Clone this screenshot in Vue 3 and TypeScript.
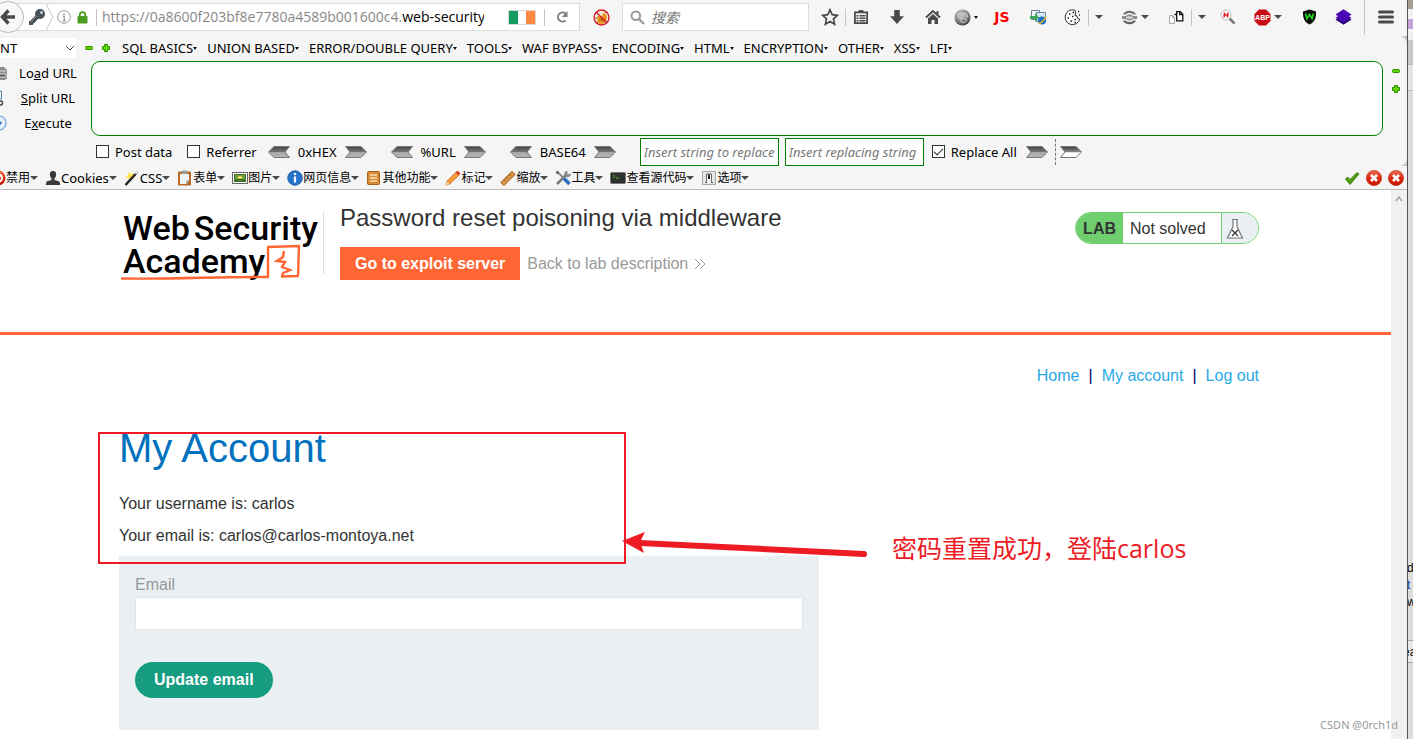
<script setup lang="ts">
import { ref } from 'vue'

const url = { scheme: 'https://0a8600f203bf8e7780a4589b001600c4.', host: 'web-security' }
const menus: string[] = ['SQL BASICS', 'UNION BASED', 'ERROR/DOUBLE QUERY', 'TOOLS', 'WAF BYPASS', 'ENCODING', 'HTML', 'ENCRYPTION', 'OTHER', 'XSS', 'LFI']
const codecs: string[] = ['0xHEX', '%URL', 'BASE64']

interface DevTool { id: string; label: string }
const devTools: DevTool[] = [
  { id: 'disable', label: '禁用' },
  { id: 'cookies', label: 'Cookies' },
  { id: 'css', label: 'CSS' },
  { id: 'forms', label: '表单' },
  { id: 'images', label: '图片' },
  { id: 'info', label: '网页信息' },
  { id: 'misc', label: '其他功能' },
  { id: 'outline', label: '标记' },
  { id: 'resize', label: '缩放' },
  { id: 'utils', label: '工具' },
  { id: 'source', label: '查看源代码' },
  { id: 'options', label: '选项' },
]

const query = ref('')
const target = ref('')
const postData = ref(false)
const referrer = ref(false)
const replaceAll = ref(true)
const needle = ref('')
const replacement = ref('')
const email = ref('')
</script>

<template>
  <div class="desktop">
    <div class="window">
      <svg class="defs" width="0" height="0" aria-hidden="true">
        <defs>
          <linearGradient id="steel" x1="0" y1="0" x2="0" y2="1">
            <stop offset="0" stop-color="#444" /><stop offset="0.5" stop-color="#777" /><stop offset="0.55" stop-color="#aaa" /><stop offset="1" stop-color="#b4b4b4" />
          </linearGradient>
          <linearGradient id="steelOpen" x1="0" y1="0" x2="0" y2="1">
            <stop offset="0" stop-color="#3c3c3c" /><stop offset="0.5" stop-color="#888" /><stop offset="0.56" stop-color="#fff" /><stop offset="1" stop-color="#fff" />
          </linearGradient>
          <radialGradient id="ball" cx="0.4" cy="0.3" r="0.7">
            <stop offset="0" stop-color="#ccc" /><stop offset="0.6" stop-color="#888" /><stop offset="1" stop-color="#444" />
          </radialGradient>
          <linearGradient id="redBall" x1="0" y1="0" x2="0" y2="1">
            <stop offset="0" stop-color="#f0704e" /><stop offset="0.5" stop-color="#dc2a12" /><stop offset="1" stop-color="#c81400" />
          </linearGradient>
        </defs>
      </svg>

      <header class="navbar">
        <button class="back" aria-label="Back">
          <svg width="16" height="16" viewBox="0 0 16 16"><path d="M8.500 1.500 2.500 8l6 6.500M3 8h12" fill="none" stroke="#4a4a4a" stroke-width="3.400" /></svg>
        </button>
        <div class="urlbar">
          <svg class="key" width="18" height="18" viewBox="0 0 18 18"><path d="M11.500 6.500 2.500 15.500" stroke="#3c4850" stroke-width="4" /><path d="M1 13v4h4v-2h2v-2h2" fill="#4a565e" /><circle cx="12" cy="6" r="5" fill="#47535b" /><circle cx="13.500" cy="4.500" r="1.500" fill="#c8d0d4" /><path d="M3 14 9 8" stroke="#8c989e" /></svg>
          <svg class="notch" width="8" height="28" viewBox="0 0 8 28"><path d="M0 1 7 14 0 27" fill="none" stroke="#c8c8c8" /></svg>
          <svg width="14" height="14" viewBox="0 0 14 14"><circle cx="7" cy="7" r="6.300" fill="none" stroke="#999" /><path d="M5.500 6H7.200V11M5.500 11h3M7 3v1.500" fill="none" stroke="#888" stroke-width="1.200" /></svg>
          <svg class="lock" width="11" height="13" viewBox="0 0 11 13"><rect x="0.500" y="5" width="10" height="7.500" rx="1" fill="#4b9b1f" /><path d="M2.800 6V3.800a2.700 2.700 0 0 1 5.400 0V6" fill="none" stroke="#4b9b1f" stroke-width="1.800" /></svg>
          <span class="bar"></span>
          <span class="address"><span class="scheme">{{ url.scheme }}</span>{{ url.host }}</span>
          <svg class="flag" width="28" height="15" viewBox="0 0 28 15"><rect x="0.500" y="0.500" width="27" height="14" fill="#fff" stroke="#d8d8d8" /><rect x="1" y="1" width="9" height="13" fill="#169b62" /><rect x="18" y="1" width="9" height="13" fill="#ff883e" /></svg>
          <span class="bar"></span>
          <button class="reload" aria-label="Reload">
            <svg width="14" height="14" viewBox="0 0 14 14"><path d="M10.500 10.500a4.600 4.600 0 1 1 0-7" fill="none" stroke="#808080" stroke-width="2" /><path d="M12.500 1v6H6.800Z" fill="#808080" /></svg>
          </button>
        </div>
        <button class="tool bug" aria-label="Firebug off">
          <svg width="17" height="17" viewBox="0 0 17 17"><circle cx="8.500" cy="8.500" r="7.500" fill="#f3e8dc" /><path d="M5 5 3.500 3M12 4l1-2M4 9H2M5 13l-2 1" stroke="#8a5a20" /><path d="M4 8c2-2 3 0 5-1l1-3 3 1 1 3-1 5-4 2-4-1Z" fill="#e8901c" /><path d="M6 11h6M8 9l2 3" stroke="#b05a10" /><circle cx="8.500" cy="8.500" r="7.500" fill="none" stroke="#d0202a" stroke-width="1.400" /><path d="m3 3 11 11" stroke="#d0202a" stroke-width="1.400" /></svg>
        </button>
        <label class="search">
          <svg width="15" height="15" viewBox="0 0 15 15"><circle cx="5.800" cy="5.800" r="4.300" fill="none" stroke="#999" stroke-width="2" /><path d="m9 9 5 5" stroke="#999" stroke-width="2.400" /></svg>
          <input v-model="query" type="search" placeholder="搜索" aria-label="搜索" />
        </label>

        <div class="addons">
          <button class="tool" aria-label="Bookmark"><svg width="18" height="18" viewBox="0 0 18 18"><path d="m9 1.800 2.200 4.900 5.200.6-3.900 3.600 1.100 5.300L9 13.500l-4.600 2.700 1.100-5.300L1.600 7.300l5.200-.6Z" fill="none" stroke="#4a4a4a" stroke-width="1.700" /></svg></button>
          <span class="bar"></span>
          <button class="tool" aria-label="Bookmark list"><svg width="16" height="16" viewBox="0 0 16 16"><path d="M1.900 3.400h12.200v10.700H1.900Z" fill="none" stroke="#4a4a4a" stroke-width="1.800" /><path d="M5 4V2l2-1h2l2 1v2Z" fill="#4a4a4a" /><path d="M3.500 6.800h2M6.500 6.800h6M3.500 9.300h2M6.500 9.300h6M3.500 11.800h2M6.500 11.800h6" stroke="#4a4a4a" stroke-width="1.400" /></svg></button>
          <button class="tool near" aria-label="Downloads"><svg width="16" height="16" viewBox="0 0 16 16"><path d="M5.200 1h5.600v6.200H15L8 15 1 7.200h4.200Z" fill="#4a4a4a" /></svg></button>
          <button class="tool near" aria-label="Home"><svg width="16" height="16" viewBox="0 0 16 16"><path d="M1 8.500 8 2l7 6.500M12.500 2v4" fill="none" stroke="#4a4a4a" stroke-width="2" /><path d="M3 9.500 8 5l5 4.500V15H9.500v-4h-3v4H3Z" fill="#4a4a4a" /></svg></button>
          <button class="tool mid" aria-label="Proxy"><svg width="17" height="17" viewBox="0 0 17 17"><circle cx="8.500" cy="8.500" r="8" fill="url(#ball)" /><path d="m4 5 3-1 2 2-1 3-3 0ZM10 4l3 1 1 3-3-1ZM7 10l4-1 2 2-3 3-3-1Z" fill="none" stroke="#d0d0d0" stroke-width="0.800" /></svg><i class="dot"></i></button>
          <button class="tool mid js">JS</button>
          <button class="tool mid" aria-label="Import"><svg width="17" height="16" viewBox="0 0 17 16"><path d="M1.500 1.500h8v9h-8Z" fill="#eef5fa" stroke="#6a8296" /><path d="M6.500 3.500h9v9h-9Z" fill="#d6e8f4" stroke="#6a8296" /><path d="M0 7h5V4l4 4.500L5 13v-3H0Z" fill="#3aa55c" /><circle cx="12" cy="11.500" r="4" fill="#1f6fc0" /><path d="M8.500 14.500c2 0 6-3 7.500-7" fill="none" stroke="#e8b428" stroke-width="1.400" /></svg></button>
          <button class="tool cookie" aria-label="Cookies"><svg width="17" height="17" viewBox="0 0 17 17"><path d="M11 1.300A7.400 7.400 0 1 0 15.700 10l-2.200-.5-.5-2.500-2-.5.500-2.500Z" fill="#fff" stroke="#333" /><path d="M5 5h1.500M8.500 3.500h1.500M3.500 9H5M8 7.500h1.500M6.500 12H8M10.500 10.500H12M10.500 13.500h1.500M14 2.500h1M15 6h1" stroke="#222" stroke-width="1.500" /></svg></button>
          <span class="bar"></span>
          <button class="tool slim" aria-label="Cookie menu"><i class="caret"></i></button>
          <button class="tool wide" aria-label="Agent"><svg width="17" height="17" viewBox="0 0 17 17"><path d="M2 5.500C4 .5 13 .5 15 5.500h-2.500c-2-2-6-2-8 0Z" fill="#707070" /><path d="M1 7h4c1.500-2 5.500-2 7 0h4v3h-4c-1.500 2-5.500 2-7 0H1Z" fill="#8c8c8c" /><ellipse cx="8.500" cy="8.500" rx="3.500" ry="1.300" fill="#d8d8d8" /><path d="M2 11.500c2 5 11 5 13 0h-2.500c-2 2-6 2-8 0Z" fill="#606060" /></svg><i class="caret"></i></button>
          <button class="tool" aria-label="Pages"><svg width="15" height="15" viewBox="0 0 15 15"><path d="M.5 5.500h3l2 2v6h-5ZM3.500 5.500v2h2" fill="#fafafa" stroke="#aaa" /><path d="M7.700 1.700h3.500l2.600 2.600v6.500H7.700ZM10.700 1.700v3h3M5.500 4.500h2" fill="#fff" stroke="#111" stroke-width="1.300" /></svg></button>
          <span class="bar"></span>
          <button class="tool slim" aria-label="Pages menu"><i class="caret"></i></button>
          <button class="tool cookie" aria-label="Http search"><svg width="16" height="16" viewBox="0 0 16 16"><path d="m9.500 9.500 5 5" stroke="#777" stroke-width="2.500" /><circle cx="6" cy="6" r="5" fill="#fff" stroke="#bbb" /><path d="M4.500 3.500 4 8.500M8 3.500l-.5 5M4.500 6H8" stroke="#e01818" stroke-width="1.500" /></svg></button>
          <button class="tool block" aria-label="Adblock"><svg width="17" height="17" viewBox="0 0 17 17"><path d="M5 .5h7L16.500 5v7L12 16.500H5L.5 12V5Z" fill="#c70d12" /><text x="8.500" y="11.300" text-anchor="middle" class="abp">ABP</text></svg><i class="caret"></i></button>
          <button class="tool shield" aria-label="Wappalyzer"><svg width="15" height="16" viewBox="0 0 15 16"><path d="M7.500.5 14 2.500c.3 6-1 10.500-6.500 13C2 13 .7 8.500 1 2.500Z" fill="#0a0a0a" /><path d="m3.500 4.500 1.500 5 2.500-4 2.500 4 1.500-5" fill="none" stroke="#1fd01f" stroke-width="1.800" /></svg></button>
          <button class="tool shield" aria-label="Layers"><svg width="17" height="16" viewBox="0 0 17 16"><path d="M.5 10.500 3 9h11l2.500 1.500-8 5.300Z" fill="#240070" /><path d="M8.500.2 16.500 5.500 14 7.200l2.500 1.600-8 4.700-8-4.700L3 7.200.5 5.500Z" fill="#4806b4" /></svg></button>
          <span class="bar tall"></span>
          <button class="tool menu" aria-label="Menu"><svg width="16" height="14" viewBox="0 0 16 14"><path d="M1.500 2h13M1.500 7h13M1.500 12h13" stroke="#4a4a4a" stroke-width="3" stroke-linecap="round" /></svg></button>
        </div>
      </header>

      <div class="hackwrap">
        <section class="hackbar">
          <nav class="menus">
            <span class="kind">
              <select aria-label="Mode"><option>NT</option></select>
              <svg width="10" height="6" viewBox="0 0 10 6"><path d="m1 1 4 4 4-4" fill="none" stroke="#444" /></svg>
            </span>
            <button class="step" aria-label="Remove"><svg width="8" height="8" viewBox="0 0 8 8"><rect x="0.500" y="2.500" width="7" height="3" rx="1" fill="#5fd800" stroke="#2c8a00" /></svg></button>
            <button class="step" aria-label="Add"><svg width="8" height="8" viewBox="0 0 8 8"><path d="M2.500.5h3v2h2v3h-2v2h-3v-2h-2v-3h2Z" fill="#5fd800" stroke="#2c8a00" /></svg></button>
            <button v-for="m in menus" :key="m" class="entry">{{ m }}<i class="dot"></i></button>
          </nav>

          <div class="editor">
            <div class="actions">
              <button><svg width="8" height="16" viewBox="0 0 8 16"><path d="M0 2h4l3 3v8l-2 2H0Z" fill="#8c8c8c" /><path d="M0 6h6M0 9h6v3H0" stroke="#e0e0e0" fill="#555" /></svg><span>Lo<u>a</u>d URL</span></button>
              <button><svg width="8" height="16" viewBox="0 0 8 16"><path d="M0 1h1.500v8H0" fill="none" stroke="#4a86a8" /><circle cx="0.500" cy="13" r="2" fill="none" stroke="#444" stroke-width="1.500" /></svg><span><u>S</u>plit URL</span></button>
              <button><svg width="8" height="16" viewBox="0 0 8 16"><circle cx="-1" cy="8" r="7" fill="#e6f0fb" stroke="#8cb0dc" stroke-width="1.500" /><path d="M-1 5 2 8l-3 3Z" fill="#2c70c8" /></svg><span>E<u>x</u>ecute</span></button>
            </div>
            <textarea v-model="target" aria-label="URL"></textarea>
            <div class="side">
              <button class="step" aria-label="Shrink"><svg width="8" height="8" viewBox="0 0 8 8"><rect x="0.500" y="2.500" width="7" height="3" rx="1" fill="#5fd800" stroke="#2c8a00" /></svg></button>
              <button class="step" aria-label="Grow"><svg width="8" height="8" viewBox="0 0 8 8"><path d="M2.500.5h3v2h2v3h-2v2h-3v-2h-2v-3h2Z" fill="#5fd800" stroke="#2c8a00" /></svg></button>
            </div>
          </div>

          <div class="encoders">
            <label class="check"><input v-model="postData" type="checkbox" />Post data</label>
            <label class="check"><input v-model="referrer" type="checkbox" />Referrer</label>
            <div v-for="c in codecs" :key="c" class="codec">
              <button :aria-label="c + ' decode'"><svg width="22" height="12" viewBox="0 0 22 12"><path d="M6 .5h15.500L17 6l4.500 5.500H6L.5 6Z" fill="url(#steel)" stroke="#777" /></svg></button>
              <span>{{ c }}</span>
              <button :aria-label="c + ' encode'"><svg width="22" height="12" viewBox="0 0 22 12"><path d="M.5.5H16L21.500 6 16 11.500H.5L5 6Z" fill="url(#steel)" stroke="#777" /></svg></button>
            </div>
            <div class="swap">
              <input v-model="needle" type="text" placeholder="Insert string to replace" aria-label="Insert string to replace" />
              <input v-model="replacement" type="text" placeholder="Insert replacing string" aria-label="Insert replacing string" />
              <label class="check"><input v-model="replaceAll" type="checkbox" />Replace All</label>
            </div>
            <button aria-label="Replace"><svg width="22" height="12" viewBox="0 0 22 12"><path d="M.5.5H16L21.500 6 16 11.500H.5L5 6Z" fill="url(#steel)" stroke="#777" /></svg></button>
            <button class="last" aria-label="Reverse"><svg width="22" height="12" viewBox="0 0 22 12"><path d="M.5.5H16L21.500 6 16 11.500H.5L5 6Z" fill="url(#steelOpen)" stroke="#777" /></svg></button>
          </div>
        </section>
      </div>

      <nav class="devbar">
        <button v-for="t in devTools" :key="t.id" :class="['dev', t.id]">
          <svg v-if="t.id === 'disable'" width="6" height="16" viewBox="10 0 6 16"><circle cx="8" cy="8" r="7.500" fill="url(#redBall)" /><circle cx="8" cy="8" r="4" fill="none" stroke="#fff" stroke-width="2" /><path d="m11 5-6 6" stroke="#fff" stroke-width="2" /></svg>
          <svg v-else-if="t.id === 'cookies'" width="16" height="16" viewBox="0 0 16 16"><path d="M8 1c3 0 3.500 2.500 3 4.500S10 8 9.500 8.500V10l5 1.500.8 3.500H.7l.8-3.500 5-1.500V8.500C6 8 5.500 7.500 5 5.500S5 1 8 1Z" fill="#3a3a3a" /></svg>
          <svg v-else-if="t.id === 'css'" width="16" height="16" viewBox="0 0 16 16"><path d="m5 1 1.500 3L10 3 8.500 6 11 8.500l-3.500 0L6 12 4.500 8 1 7.500 4 5.500Z" fill="#ffe04a" /><path d="M1.500 15 13 2.500" stroke="#222" stroke-width="2.500" /><path d="m11.500 4 2.500-2.800" stroke="#ddd" stroke-width="2.500" /></svg>
          <svg v-else-if="t.id === 'forms'" width="16" height="16" viewBox="0 0 16 16"><rect x="1" y="1.500" width="13" height="14" rx="1" fill="#b86a28" /><path d="M3 4h9v6l-3 4H3Z" fill="#eef3f8" /><path d="M12 10H9v4Z" fill="#b8c4d0" /><rect x="5" y="0.500" width="5" height="3.500" fill="#999" /></svg>
          <svg v-else-if="t.id === 'images'" width="16" height="16" viewBox="0 0 16 16"><rect x="0.500" y="2.500" width="15" height="11" fill="#fff" stroke="#666" /><rect x="2.500" y="4.500" width="11" height="7" fill="#6fa23c" stroke="#3e6e28" /><circle cx="8" cy="8" r="2" fill="#fbe05a" /><path d="M3 11c2-2 8-2 10 0" stroke="#285c1a" stroke-width="1.500" fill="none" /></svg>
          <svg v-else-if="t.id === 'info'" width="16" height="16" viewBox="0 0 16 16"><circle cx="8" cy="8" r="7.200" fill="#2676cc" stroke="#1458a8" /><path d="M8 6.500v6M8 3v2" stroke="#fff" stroke-width="2.200" /></svg>
          <svg v-else-if="t.id === 'misc'" width="16" height="16" viewBox="0 0 16 16"><rect x="1.500" y="1.500" width="12" height="13" rx="1" fill="#d58a34" stroke="#a8601a" /><path d="M4 5h7M4 8h7M4 11h7" stroke="#fbe2b4" stroke-width="1.500" /></svg>
          <svg v-else-if="t.id === 'outline'" width="16" height="16" viewBox="0 0 16 16"><path d="m1 15 1-4L11 2l3 3-9 9Z" fill="#f49b3a" stroke="#c46a18" stroke-width="0.700" /><path d="m10.500 2.500 2-2 3 3-2 2Z" fill="#d8442c" /><path d="m1 15 1-3.500L4.500 14Z" fill="#f6dfb8" /></svg>
          <svg v-else-if="t.id === 'resize'" width="16" height="16" viewBox="0 0 16 16"><path d="M.8 12.500 12 1.200 15.200 4.400 4 15.500Z" fill="#dc9548" stroke="#a8621e" /><path d="m4 9.500 1.500 1.500M6.500 7 8 8.500M9 4.500l1.500 1.500" stroke="#8a4c12" /></svg>
          <svg v-else-if="t.id === 'utils'" width="16" height="16" viewBox="0 0 16 16"><path d="m2 14 9-9" stroke="#777" stroke-width="2.500" /><path d="M10 1.500 13 1l-1 2 1.500 1.500L15.500 3v3l-3 1.500L9 5Z" fill="#888" /><path d="m2 1.500 7 7" stroke="#888" stroke-width="1.800" /><path d="m9 8.500 5.500 5.500" stroke="#2a6cc0" stroke-width="3.500" /><path d="M.5 2.500 2.500.5l2 2-2 2Z" fill="#666" /></svg>
          <svg v-else-if="t.id === 'source'" width="16" height="16" viewBox="0 0 16 16"><rect x="0.500" y="2.500" width="15" height="11" rx="1" fill="#2c332c" stroke="#777" /><path d="m3 5 2 1.500L3 8M6 8h3" fill="none" stroke="#63b044" /></svg>
          <svg v-else width="16" height="16" viewBox="0 0 16 16"><rect x="1.500" y="1.500" width="13" height="13" fill="#e6e6e6" stroke="#aaa" /><path d="M5.500 12.500V4h5v8.500M4 12.500h2M10 12.500h2" fill="#f4f4f4" stroke="#666" /><path d="M8 4.500V9" stroke="#222" stroke-width="2" /></svg>
          <span>{{ t.label }}</span><i class="caret"></i>
        </button>
        <div class="status">
          <svg width="16" height="16" viewBox="0 0 16 16"><path d="m1.500 9 2-2 2.500 2.500L13 2.500l2 1.500-9 10.500Z" fill="#4fa00e" stroke="#2f6e08" stroke-width="0.800" /></svg>
          <svg v-for="n in 2" :key="n" width="16" height="16" viewBox="0 0 16 16"><circle cx="8" cy="8" r="7.600" fill="url(#redBall)" stroke="#b81800" stroke-width="0.600" /><path d="m5 5 6 6M11 5l-6 6" stroke="#fff" stroke-width="2.600" /></svg>
        </div>
      </nav>

      <div class="viewport">
        <main class="page">
          <header class="lab">
            <div class="labrow">
              <a class="brand" href="#" aria-label="Web Security Academy">
                <span class="line"><span>Web</span><span>Security</span></span>
                <span class="line">Academy</span>
                <svg class="swoosh" width="184" height="38" viewBox="0 0 184 38"><path d="M2 34.500c50 1 100-2 147-1.500L149 3l31-1-1 30-17 .5" fill="none" stroke="#ff6633" stroke-width="2.400" stroke-linejoin="round" /><path d="m165 7-1 6-6 4 8 1-3 5 8 3-7 3-1 4" fill="none" stroke="#ff6633" stroke-width="2.400" /></svg>
              </a>
              <div class="titles">
                <h2>Password reset poisoning via middleware</h2>
                <div class="links">
                  <a class="exploit" href="#">Go to exploit server</a>
                  <a class="return" href="#">Back to lab description
                    <svg width="12" height="12" viewBox="0 0 12 12"><path d="m1 1 5 5-5 5M6 1l5 5-5 5" fill="none" stroke="#999" /></svg></a>
                </div>
              </div>
              <div class="badge">
                <b>LAB</b><span>Not solved</span>
                <i><svg width="18" height="22" viewBox="0 0 18 22"><path d="M6 1.500h6M7 2v6.500L1.500 20h15L11 8.500V2" fill="#fff" stroke="#777" stroke-width="1.200" /><path d="m6 12 6 6M12 12l-6 6" stroke="#333" stroke-width="1.200" /></svg></i>
              </div>
            </div>
          </header>

          <div class="content">
            <nav class="account">
              <a href="#">Home</a><span>|</span><a href="#">My account</a><span>|</span><a href="#">Log out</a>
            </nav>
            <h1>My Account</h1>
            <p>Your username is: carlos</p>
            <p>Your email is: carlos@carlos-montoya.net</p>
            <form class="change" @submit.prevent>
              <label for="email">Email</label>
              <input id="email" v-model="email" type="email" />
              <button type="submit">Update email</button>
            </form>
          </div>
        </main>
        <div class="scrollbar"><svg width="8" height="6" viewBox="0 0 8 6"><path d="m1 5 3-4 3 4" fill="none" stroke="#aaa" stroke-width="1.600" /></svg></div>
      </div>
    </div>

    <aside class="behind" aria-hidden="true">
      <div class="sky"></div><div class="tab"></div><div class="grey"></div><div class="rows"></div>
      <div class="words"><span>d</span><span class="blue">t</span><span>w</span></div>
      <div class="cell"><span>ea</span></div>
    </aside>

    <div class="frame"></div>
    <svg class="arrow" width="246" height="32" viewBox="0 0 246 32"><path d="M18 11 242 22" stroke="#ed1c24" stroke-width="6" stroke-linecap="round" /><path d="M0 9 23 0 18 10 22 21Z" fill="#ed1c24" /></svg>
    <div class="note">密码重置成功，登陆carlos</div>
    <div class="mark">CSDN @0rch1d</div>
  </div>
</template>

<style>
body { margin: 0; }
</style>

<style scoped>
* { box-sizing: border-box; }
.desktop { position: relative; display: flex; min-height: 100vh; overflow: hidden; background: #d9d9d9; font-family: "Noto Sans", "Noto Sans CJK SC", sans-serif; font-size: 13px; color: #000; }
.window { flex: 1; min-width: 0; display: flex; flex-direction: column; background: #f5f5f5; border-right: 1px solid #555; }
.defs { position: absolute; }
button { border: 0; padding: 0; background: none; font: inherit; color: inherit; }
svg { display: block; flex: none; overflow: hidden; }
i { font-style: normal; flex: none; }
.bar { flex: none; width: 1px; height: 17px; background: #c4c4c4; }
.caret { width: 0; height: 0; border: 4px solid transparent; border-top-color: #4a4a4a; border-bottom: 0; }
.dot { width: 0; height: 0; border: 2px solid transparent; border-top: 3px solid #111; border-bottom: 0; }

.navbar { display: flex; align-items: center; height: 36px; padding-bottom: 2px; }
.back { position: relative; z-index: 1; flex: none; display: grid; place-items: center; width: 32px; height: 32px; margin-left: -8px; border: 1px solid #bbb; border-radius: 16px; background: #f8f8f8; }
.urlbar { flex: 1; min-width: 0; display: flex; align-items: center; height: 28px; margin-left: -8px; padding-left: 11px; border: 1px solid #dcdcdc; background: #fff; }
.notch { margin-right: 3px; }
.lock { margin: 0 8px 0 6px; }
.address { flex: 1; min-width: 0; margin: 0 24px 0 5px; overflow: hidden; white-space: nowrap; font-family: "Open Sans", sans-serif; font-size: 14px; line-height: 24px; }
.scheme { color: #888; }
.flag { margin-right: 8px; }
.reload { display: grid; place-items: center; width: 34px; height: 26px; }
.search { flex: none; display: flex; align-items: center; gap: 6px; width: 187px; height: 28px; margin-left: 6px; padding-left: 7px; border: 1px solid #dcdcdc; background: #fff; }
.search input { flex: 1; min-width: 0; border: 0; padding: 0; outline: 0; background: none; font: italic 14px "Noto Sans CJK SC", sans-serif; }
.search input::placeholder { color: #777; }
.addons { flex: none; display: flex; align-items: center; margin-left: 6px; }
.tool { flex: none; display: flex; align-items: center; justify-content: center; gap: 3px; width: 30px; height: 30px; }
.tool.near { margin-left: 6px; }
.tool.cookie { width: 32px; }
.tool.shield { width: 34px; }
.tool.mid { width: 36px; }
.tool.slim { width: 20px; }
.tool.wide { width: 52px; }
.tool.block { width: 48px; }
.tool.menu { width: 42px; }
.tool.bug { margin-left: 6px; }
.bar.tall { height: 36px; margin-left: 4px; }
.js { color: #f00; font: bold 14px "DejaVu Sans", sans-serif; }
.abp { fill: #fff; font: bold 7px "Liberation Sans", sans-serif; }

.hackwrap { background: #c4c4c4; }
.hackbar { background: #f5f5f5; border-radius: 0 8px 8px 0; }
.menus { display: flex; align-items: center; height: 24px; }
.kind { position: relative; flex: none; width: 76px; height: 20px; margin-right: 9px; background: #fff; }
.kind select { width: 100%; height: 100%; border: 0; padding: 0; appearance: none; background: none; font: inherit; }
.kind svg { position: absolute; right: 1px; top: 7px; }
.step { flex: none; width: 9px; margin-right: 8px; }
.entry { flex: none; display: flex; align-items: center; margin-right: 10px; line-height: 18px; }
.step + .entry { margin-left: 3px; }
.editor { display: flex; padding-top: 1px; }
.actions { flex: none; width: 91px; }
.actions button { display: flex; align-items: center; width: 100%; height: 25px; padding-bottom: 2px; }
.actions span { flex: 1; padding-right: 3px; text-align: center; }
.editor textarea { flex: 1; min-width: 0; height: 75px; border: 1px solid #008000; border-radius: 9px; padding: 4px; outline: 0; resize: none; background: #fff; }
.side { flex: none; display: flex; flex-direction: column; gap: 10px; width: 24px; padding: 6px 0 0 9px; }
.encoders { display: flex; align-items: center; height: 29px; margin-top: 1px; padding-left: 96px; }
.check { display: flex; align-items: center; gap: 6px; margin-right: 15px; white-space: nowrap; }
.check input { appearance: none; width: 13px; height: 13px; margin: 0; border: 1px solid #333; background: #fff; display: grid; place-items: center; }
.check input:checked::after { content: ""; width: 8px; height: 4px; margin-bottom: 3px; border: solid #222; border-width: 0 0 1px 1px; transform: rotate(-45deg); }
.codec { display: flex; align-items: center; gap: 8px; margin-right: 24px; }
.check + .codec { margin-left: -4px; }
.swap { display: flex; align-items: center; gap: 6px; }
.swap > input { width: 139px; height: 28px; border: 1px solid #008000; border-radius: 0; padding: 0 3px; outline: 0; background: #fff; font: italic 13px "Noto Sans", sans-serif; }
.swap > input::placeholder { color: #777; }
.swap .check { margin: 0 9px 0 2px; }
.last { margin-left: 7px; padding: 7px 0 7px 4px; border-left: 1px dashed #777; }

.devbar { display: flex; align-items: center; height: 24px; border-bottom: 1px solid #bbb; }
.dev { flex: none; display: flex; align-items: center; margin-right: 7px; font-size: 12px; line-height: 20px; }
.dev.cookies, .dev.css { font-size: 13px; }
.status { display: flex; gap: 6px; margin-left: auto; padding-right: 3px; }

.viewport { flex: 1; display: flex; }
.page { flex: 1; min-width: 0; background: #fff; font-family: "Liberation Sans", Arial, sans-serif; font-size: 16px; color: #333; }
.scrollbar { flex: none; display: flex; justify-content: center; width: 16px; padding-top: 6px; background: #f0f0f0; }
.lab { height: 145px; border-bottom: 3px solid #ff6633; padding: 12px 132px 0 119px; }
.labrow { display: flex; align-items: flex-start; }
.brand { position: relative; flex: none; width: 205px; height: 62px; margin-top: 10px; border-right: 1px solid #ddd; color: #000; text-decoration: none; font: 500 34px "Roboto", sans-serif; }
.line { display: flex; gap: 4px; height: 33px; padding-left: 4px; line-height: 33px; white-space: nowrap; }
.swoosh { position: absolute; left: 0; top: 32px; }
.titles { flex: 1; padding-left: 16px; }
h2 { margin: 0; font-size: 24px; font-weight: 400; line-height: 32px; }
.links { display: flex; align-items: center; gap: 7px; margin-top: 13px; }
.exploit { padding: 0 15px; background: #ff6633; color: #fff; font-weight: 700; line-height: 33px; text-decoration: none; }
.return { display: flex; align-items: center; gap: 6px; color: #999; text-decoration: none; }
.badge { flex: none; display: flex; height: 32px; margin-top: 10px; border: 1px solid #6fcf6f; border-radius: 16px; overflow: hidden; line-height: 31px; }
.badge b { padding: 0 7px; background: #6fcf6f; }
.badge span { width: 98px; padding-left: 7px; }
.badge i { width: 37px; padding: 5px 0 0 4px; border-left: 1px solid #6fcf6f; background: #e9eff2; }
.content { padding: 30px 132px 0 119px; }
.account { display: flex; justify-content: flex-end; gap: 9px; line-height: 22px; color: #000066; }
.account a { color: #29a8e6; text-decoration: none; }
h1 { margin: 37px 0 20px; color: #0071bc; font-size: 40px; font-weight: 400; line-height: 48px; }
p { margin: 0 0 8px; line-height: 24px; }
.change { width: 700px; max-width: 100%; padding: 16px 16px 32px; background: #e9eff2; }
.change label { display: block; color: #999; line-height: 25px; }
.change input { display: block; width: 100%; height: 33px; border: 1px solid #e0e4e6; padding: 0 8px; outline: 0; background: #fff; font: inherit; }
.change button { display: block; height: 36px; margin-top: 32px; padding: 0 19px; border-radius: 18px; background: #169c80; color: #fff; font-weight: 700; }

.behind { flex: none; width: 5px; overflow: hidden; background: #dcdcdc; font: 12px "Liberation Sans", sans-serif; }
.sky { height: 9px; background: #a89f92; }
.tab { height: 31px; border-top: 10px solid #f0f0f0; border-bottom: 11px solid #f0f0f0; background: #c8a0dc; }
.grey { height: 24px; background: #c8c8c8; }
.rows { height: 496px; border-top: 1px solid #bbb; background: linear-gradient(#e4e4e4 25px, #bbb 25px, #bbb 26px, #dcdcdc 26px); }
.words { display: flex; flex-direction: column; height: 80px; line-height: 17px; }
.words span { margin-left: -1px; }
.blue { color: #0645ad; }
.cell { height: 23px; border: solid #aaa; border-width: 1px 0; background: #e8e8e8; line-height: 22px; }
.cell span { margin-left: -5px; }

.frame { position: absolute; left: 98px; top: 432px; width: 528px; height: 132px; border: 2px solid #ed1c24; }
.arrow { position: absolute; left: 622px; top: 532px; }
.note { position: absolute; left: 892px; top: 532px; color: #ed1c24; font: 25px/32px "Open Sans", "Noto Sans CJK SC", sans-serif; white-space: nowrap; }
.mark { position: absolute; right: 15px; bottom: 6px; color: #999; font: 11px/16px "Noto Sans", sans-serif; }
</style>
